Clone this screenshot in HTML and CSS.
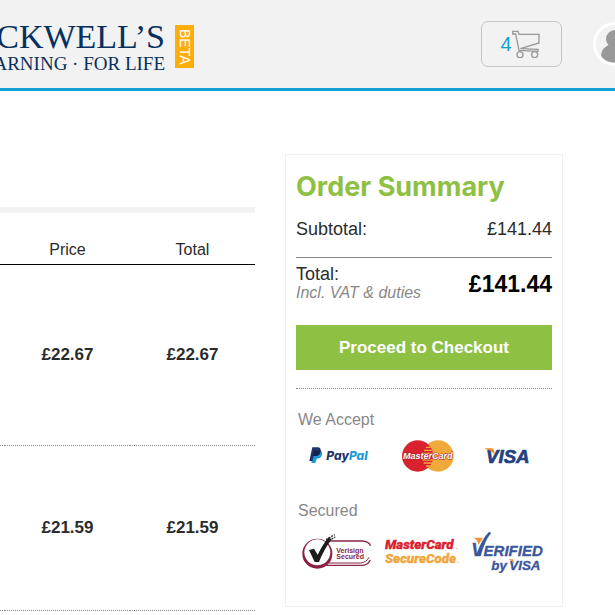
FILE: index.html
```html
<!DOCTYPE html>
<html lang="en">
<head>
    <meta charset="utf-8">
    <title>Your Basket</title>
    <link rel="stylesheet" href="styles.css">
</head>
<body>
    <header class="header">
        <a class="logo" href="#">
            <span class="logo-name">CKWELL’S</span>
            <span class="logo-tagline">ARNING · FOR LIFE</span>
        </a>
        <span class="beta">BETA</span>

        <a class="basket" href="#">
            <span>4</span>
            <svg width="28" height="28" viewBox="0 0 84 84" fill="none" stroke="#999" stroke-width="4">
                <path d="M2 4H18L21 13H81V39L25 56L78 58V64L21 61L11 12H2Z"/>
                <circle cx="24" cy="74" r="9"/>
                <circle cx="68" cy="74" r="9"/>
            </svg>
        </a>
        <a class="account" href="#" aria-label="Account">
            <svg width="38" height="38" viewBox="0 0 38 38" fill="#999">
                <circle cx="19" cy="14" r="9"/>
                <path d="M5 30C6 23 11 19 19 19S32 23 33 30C30 40 8 40 5 30Z"/>
            </svg>
        </a>
    </header>

    <main class="page">
        <section class="items">
            <table class="items-table">
                <thead>
                    <tr>
                        <td></td>
                        <th>Price</th>
                        <th>Total</th>
                    </tr>
                </thead>
                <tbody>
                    <tr class="item item-tall">
                        <td></td>
                        <td>£22.67</td>
                        <td>£22.67</td>
                    </tr>
                    <tr class="item">
                        <td></td>
                        <td>£21.59</td>
                        <td>£21.59</td>
                    </tr>
                </tbody>
            </table>
        </section>

        <aside class="summary">
            <h2>Order Summary</h2>
            <div class="subtotal">
                <span>Subtotal:</span>
                <span>£141.44</span>
            </div>
            <div class="total">
                <div>
                    <div>Total:</div>
                    <em>Incl. VAT &amp; duties</em>
                </div>
                <strong>£141.44</strong>
            </div>
            <button class="checkout" type="button">Proceed to Checkout</button>

            <h3>We Accept</h3>
            <div class="logos cards">
                <!-- PayPal -->
                <svg width="62" height="20" viewBox="0 0 186 60">
                    <path fill="#1a9bd7" d="M18 14H38Q45 19 41 29Q37 38 26 38L22 51H10Z"/>
                    <path fill="#1f3468" d="M13 4H31Q40 6 38 17Q35 30 21 30H17L13 45H4Z"/>
                    <path fill="#16224d" d="M18 14H38Q35 30 21 30H14Z"/>
                    <text x="55" y="41" class="mark-paypal"><tspan fill="#1f3468">Pay</tspan><tspan fill="#1a9bd7">Pal</tspan></text>
                </svg>
                <!-- MasterCard -->
                <svg width="52" height="32" viewBox="0 0 156 96">
                    <circle cx="108" cy="48" r="47" fill="#f2a93b"/>
                    <circle cx="47" cy="48" r="47" fill="#d9222e"/>
                    <path stroke="#f2a93b" stroke-width="4" d="M72 22H86M66 31H91M62 40H94M62 60H94M65 69H92M72 78H86"/>
                    <text x="3" y="58" class="mark-mastercard">MasterCard</text>
                </svg>
                <!-- Visa -->
                <svg width="46" height="20" viewBox="0 0 138 60">
                    <text x="3" y="51" class="mark-visa">VISA</text>
                    <path fill="#f08a24" d="M0 7H20Q28 8 29 26Q20 13 0 9Z"/>
                </svg>
            </div>

            <h3>Secured</h3>
            <div class="logos badges">
                <!-- VeriSign -->
                <svg width="72" height="40" viewBox="0 0 216 120" fill="none">
                    <path stroke="#8b2545" stroke-width="4" d="M76 27H184Q207 30 208 42M208 84Q201 100 181 100H76"/>
                    <path stroke="#8b2545" stroke-width="3" d="M80 93H178Q196 92 204 76"/>
                    <circle cx="49" cy="65" r="45" fill="#8b1f42"/>
                    <circle cx="49" cy="61" r="39" fill="#fff"/>
                    <path fill="#1c1c1c" d="M24 54L39 50L50 68Q66 36 83 16L92 22Q68 54 54 90H41Z"/>
                    <path stroke="#333" stroke-width="4" stroke-dasharray="6 3" d="M75 23L101 8M84 26L103 15"/>
                    <text x="106" y="63" class="mark-verisign">Verisign</text>
                    <text x="106" y="81" class="mark-verisign">Secured</text>
                </svg>
                <!-- MasterCard SecureCode -->
                <svg width="74" height="32" viewBox="0 0 222 96">
                    <text x="0" y="39" class="mark-securecode" fill="#d9222e" stroke="#d9222e">MasterCard</text>
                    <text x="0" y="81" class="mark-securecode" fill="#f2a53a" stroke="#f2a53a">SecureCode</text>
                    <circle cx="216" cy="37" r="2" fill="#e98b90"/>
                    <circle cx="219" cy="79" r="2" fill="#f2a53a"/>
                </svg>
                <!-- Verified by Visa -->
                <svg width="74" height="42" viewBox="0 0 222 126" fill="#3a579c" stroke="#3a579c">
                    <text x="4" y="76" class="mark-verified"><tspan class="mark-verified-v">V</tspan>ERIFIED</text>
                    <path d="M24 60Q36 25 57 3L63 6Q42 32 32 75H24Z"/>
                    <path fill="#f0913a" stroke="none" d="M10 20H39L25 42Q24 27 10 20Z"/>
                    <text x="64" y="116" class="mark-by">by</text>
                    <text x="118" y="116" class="mark-by">VISA</text>
                    <path fill="#f0913a" stroke="none" d="M114 85H129L133 98Q126 88 114 85Z"/>
                </svg>
            </div>
        </aside>
    </main>
</body>
</html>
```

FILE: styles.css
```css
* {
    box-sizing: border-box;
}

body {
    margin: 0;
    background: #fff;
    color: #2b2b2b;
    font-family: "Liberation Sans", Arial, sans-serif;
    font-size: 18px;
    line-height: 20px;
    overflow-x: hidden;
}

a {
    color: inherit;
    text-decoration: none;
}

/* Header */
.header {
    display: flex;
    align-items: center;
    height: 91px;
    border-bottom: 3px solid #12a0d7;
    background: #f2f2f2;
    overflow: hidden;
}

.logo {
    display: flex;
    flex-direction: column;
    align-items: flex-end;
    padding-top: 6px;
    width: 165px;
    color: #06305f;
    font-family: "Liberation Serif", "Times New Roman", serif;
    white-space: nowrap;
}

.logo-name {
    font-size: 34px;
    line-height: 34px;
}

.logo-tagline {
    font-size: 19px;
    line-height: 20px;
}

.beta {
    margin: 5px 0 0 10px;
    padding: 4px 0;
    width: 19px;
    background: #fdae08;
    color: #fff;
    font-size: 14px;
    line-height: 19px;
    writing-mode: vertical-rl;
}

.basket {
    display: flex;
    align-items: center;
    justify-content: center;
    margin-left: auto;
    padding-right: 3px;
    width: 81px;
    height: 46px;
    border: 1px solid #c6c6c6;
    border-radius: 7px;
    color: #12a0d7;
    font-size: 20px;
}

.account {
    flex-shrink: 0;
    margin: 0 -22px 0 31px;
    width: 44px;
    height: 44px;
    border: 3px solid #fff;
    border-radius: 50%;
}

.account svg {
    display: block;
}

/* Basket items */
.page {
    display: flex;
    align-items: flex-start;
    gap: 30px;
    padding: 63px 52px 0 0;
}

.items {
    flex: 1;
    margin-top: 53px;
    border-top: 6px solid #f2f2f2;
}

.items-table {
    width: 100%;
    table-layout: fixed;
    border-collapse: collapse;
    text-align: center;
}

.items-table th,
.items-table td {
    padding: 0;
}

.items-table th {
    width: 125px;
    height: 51px;
    padding-top: 23px;
    font-size: 16px;
    font-weight: normal;
}

.items-table thead tr {
    border-bottom: 1px solid #000;
}

.item {
    height: 165px;
    border-bottom: 1px dotted #888;
    font-size: 17px;
    font-weight: bold;
}

.item-tall {
    height: 181px;
}

/* Order summary */
.summary {
    width: 278px;
    padding: 16px 10px 33px;
    border: 1px solid #f0f0f0;
}

.summary h2 {
    margin: 0;
    color: #8dc043;
    font-family: Inter, sans-serif;
    font-size: 27px;
    font-weight: 700;
    line-height: 32px;
    white-space: nowrap;
}

.subtotal,
.total {
    display: flex;
    justify-content: space-between;
    align-items: center;
}

.subtotal {
    padding: 16px 0 18px;
    border-bottom: 1px solid #888;
}

.total {
    padding: 6px 0 23px;
}

.total em {
    display: block;
    color: #888;
    font-size: 16px;
    line-height: 18px;
}

.total strong {
    padding-top: 2px;
    color: #000;
    font-size: 23px;
}

.checkout {
    display: block;
    width: 100%;
    height: 45px;
    margin-bottom: 18px;
    border: 0;
    background: #8dc043;
    color: #fff;
    font-family: inherit;
    font-size: 17px;
    font-weight: bold;
    cursor: pointer;
}

.summary h3 {
    margin: 0;
    padding-left: 2px;
    color: #888;
    font-size: 16px;
    font-weight: normal;
}

.checkout + h3 {
    padding-top: 21px;
    border-top: 1px dotted #888;
}

.logos {
    display: flex;
    align-items: center;
    justify-content: space-between;
}

.cards {
    padding: 10px 21px 29px 12px;
}

.badges {
    padding: 10px 8px 0 5px;
}

/* Text inside the payment marks */
.mark-paypal {
    font: italic 800 36px Inter, sans-serif;
}

.mark-mastercard {
    fill: #fff;
    stroke: #a3252f;
    stroke-width: 3px;
    paint-order: stroke;
    font: italic bold 27px "Liberation Sans", sans-serif;
}

.mark-visa {
    fill: #25417f;
    stroke: #25417f;
    stroke-width: 2px;
    font: italic bold 56px "Liberation Sans", sans-serif;
}

.mark-verisign {
    fill: #8b1f42;
    font: bold 21px "Liberation Sans", sans-serif;
}

.mark-securecode {
    stroke-width: 1px;
    font: italic 900 40px Roboto, sans-serif;
}

.mark-verified {
    font: italic bold 45px "Liberation Sans", sans-serif;
}

.mark-verified-v {
    font-size: 55px;
}

.mark-by {
    font: italic bold 40px "Liberation Sans", sans-serif;
}
```
